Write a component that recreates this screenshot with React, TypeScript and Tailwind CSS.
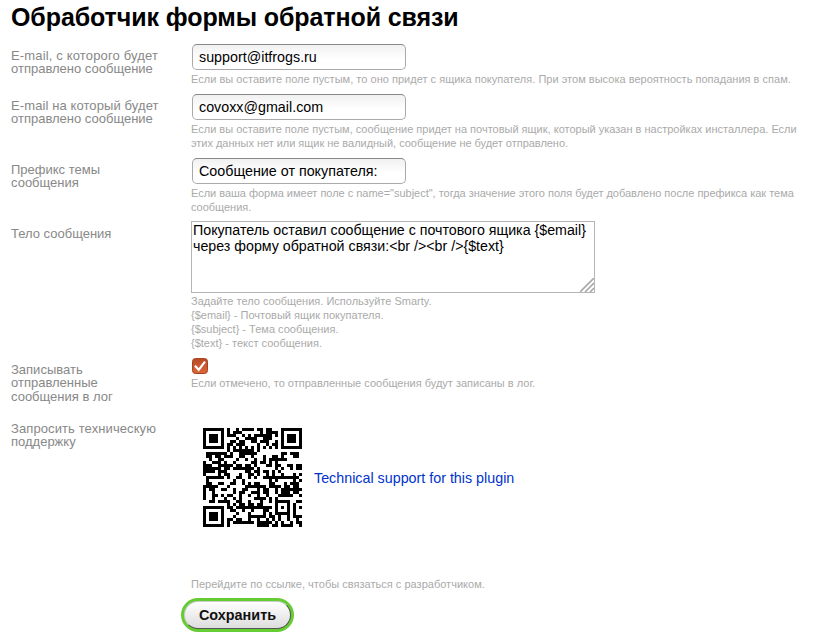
import type { ReactNode } from "react";

const qrRows = [
  "111111100011110100011100101111111",
  "100000101100100111010000101000001",
  "101110101101110110011101001011101",
  "101110100100011010011011001011101",
  "101110101110001011100100001011101",
  "100000100001101100111001101000001",
  "111111101010101010101010101111111",
  "000000001100111001100111000000000",
  "111100110111011100100011101110010",
  "001110001001100111011100111101100",
  "110001111001110001110011000100111",
  "111011001110011111000110111100011",
  "010011110111000111101100011001110",
  "111000011100111001100111101110011",
  "011110110011101110001110110011100",
  "110100001101110011110000011101111",
  "100111110001011101110111000111001",
  "001100011110001100011110111100110",
  "110011101100111111001001101111011",
  "111001001111001000111100110001110",
  "001111110001111011001111001100011",
  "110001010111100110111001111011100",
  "011110110100011100011100100111110",
  "111000001110111101100110111100011",
  "100111110011001110111000111110110",
  "000000001101110001110111100011100",
  "111111101110011100011101101011001",
  "100000100011000111011001100011110",
  "101110101001111100110010111110011",
  "101110101110011011100111001110100",
  "101110100111001110001111111000111",
  "100000101100111001111001101110011",
  "111111101011100011011110001100101",
];

// Finder squares with their separators, and the two timing lines, stay unmasked.
const isFunction = (x: number, y: number) =>
  (x < 8 && y < 8) || (x > 24 && y < 8) || (x < 8 && y > 24) || x === 6 || y === 6;

function isDark(cell: string, x: number, y: number) {
  if (isFunction(x, y)) {
    if (x === 6 && y > 7 && y < 25) return y % 2 === 0;
    return cell === "1";
  }
  const masked = (((x * y) % 3) + ((x + y) % 2)) % 2 === 0;
  return (cell === "1") !== masked;
}

function QrCode() {
  const modules = qrRows
    .flatMap((row, y) => [...row].map((cell, x) => (isDark(cell, x, y) ? `M${x} ${y}h1v1h-1z` : "")))
    .join("");
  return (
    <svg className="ml-3 block size-[99px]" viewBox="0 0 33 33" shapeRendering="crispEdges" aria-label="QR">
      <path d={modules} fill="#000" />
      <path d="M24 24h5v5h-5z" fill="#000" />
      <path d="M25 25h3v3h-3z" fill="#fff" />
      <path d="M26 26h1v1h-1z" fill="#000" />
    </svg>
  );
}

function Row({ label, height, children }: { label: ReactNode; height: string; children: ReactNode }) {
  return (
    <div className={`flex ${height}`}>
      <div className="w-[180px] shrink-0 pt-[5px] text-[13px] leading-[13.3px] whitespace-nowrap text-[#888]">
        {label}
      </div>
      <div className="min-w-0 flex-1">{children}</div>
    </div>
  );
}

function Field({ value }: { value: string }) {
  return (
    <input
      className="ml-px block h-[26px] w-[214px] rounded-[5px] border border-[#aaa] border-t-[#888] bg-linear-to-b from-[#f1f1f1] to-white to-60% px-[6px] text-[14.3px] text-black outline-none"
      defaultValue={value}
    />
  );
}

function Hint({ children, className = "" }: { children: ReactNode; className?: string }) {
  return (
    <div className={`text-[11px] leading-[14px] whitespace-nowrap text-[#aaa] ${className}`}>{children}</div>
  );
}

export default function App() {
  return (
    <main className="h-[636px] w-[817px] overflow-hidden bg-white pl-[11px] font-['Liberation_Sans',Arial,sans-serif]">
      <h1 className="h-11 pt-[2px] text-[25px] leading-[30px] font-bold tracking-[-0.09px] whitespace-nowrap text-black">
        Обработчик формы обратной связи
      </h1>
      <Row
        height="h-[50px]"
        label={<><span className="tracking-[0.16px]">E-mail, с которого будет</span><br />отправлено сообщение</>}
      >
        <Field value="support@itfrogs.ru" />
        <Hint className="mt-[2px] tracking-[0.02px]">
          Если вы оставите поле пустым, то оно придет с ящика покупателя. При этом высока вероятность попадания в спам.
        </Hint>
      </Row>
      <Row
        height="h-16"
        label={<><span className="tracking-[0.1px]">E-mail на который будет</span><br />отправлено сообщение</>}
      >
        <Field value="covoxx@gmail.com" />
        <Hint className="mt-[2px]">
          Если вы оставите поле пустым, сообщение придет на почтовый ящик, который указан в настройках инсталлера. Если<br />
          <span className="tracking-[-0.03px]">этих данных нет или ящик не валидный, сообщение не будет отправлено.</span>
        </Hint>
      </Row>
      <Row height="h-16" label={<>Префикс темы<br />сообщения</>}>
        <Field value="Сообщение от покупателя:" />
        <Hint className="mt-[2px] tracking-[-0.02px]">
          Если ваша форма имеет поле с name="subject", тогда значение этого поля будет добавлено после префикса как тема<br />
          сообщения.
        </Hint>
      </Row>
      <Row height="h-[136px]" label="Тело сообщения">
        <div className="relative -mt-px h-[72px] w-[404px]">
          <textarea
            className="block size-full resize-none overflow-hidden border border-[#b5b5b5] bg-white px-px text-[14.23px] leading-4 whitespace-pre text-black outline-none"
            defaultValue={"Покупатель оставил сообщение с почтового ящика {$email}\nчерез форму обратной связи:<br /><br />{$text}"}
          />
          <svg className="absolute right-px bottom-px size-[14px]" viewBox="0 0 14 14" fill="none" stroke="#aaa" strokeWidth="1.7">
            <path d="M0 14 14 0M5 14 14 5M10 14 14 10" />
          </svg>
        </div>
        <Hint className="mt-px">
          Задайте тело сообщения. Используйте Smarty.<br />
          {"{$email} - Почтовый ящик покупателя."}<br />
          {"{$subject} - Тема сообщения."}<br />
          {"{$text} - текст сообщения."}
        </Hint>
      </Row>
      <Row height="h-[59px]" label={<>Записывать<br />отправленные<br />сообщения в лог</>}>
        <svg className="ml-px block size-4" viewBox="0 0 16 16" role="checkbox" aria-checked="true">
          <defs>
            <linearGradient id="check" x1="0" y1="0" x2="0" y2="1">
              <stop stopColor="#b94a26" />
              <stop offset="1" stopColor="#dd6738" />
            </linearGradient>
          </defs>
          <rect x=".5" y=".5" width="15" height="15" rx="3" fill="url(#check)" stroke="#a4441f" />
          <path d="m3 7.8 3.7 4L13 3.6" fill="none" stroke="#fff" strokeWidth="2.2" />
        </svg>
        <Hint className="mt-[2px]">Если отмечено, то отправленные сообщения будут записаны в лог.</Hint>
      </Row>
      <Row
        height="h-[181px]"
        label={<><span className="tracking-[0.1px]">Запросить техническую</span><br />поддержку</>}
      >
        <div className="flex h-[160px] items-start pt-[11px]">
          <QrCode />
          <a className="mt-[41px] ml-3 text-[14.3px] leading-[18px] whitespace-nowrap text-[#03c]" href="#">
            Technical support for this plugin
          </a>
        </div>
        <Hint className="tracking-[0.02px]">Перейдите по ссылке, чтобы связаться с разработчиком.</Hint>
      </Row>
      <div className="ml-[170px] h-[34px] w-[113px] rounded-full bg-[#66cc33] p-[3px]">
        <button className="block size-full rounded-full border border-[#ccc] border-r-[#555] border-b-[#555] bg-linear-to-b from-white to-[#ddd] text-[14.4px] leading-[24px] font-bold text-[#111]">
          Сохранить
        </button>
      </div>
    </main>
  );
}
